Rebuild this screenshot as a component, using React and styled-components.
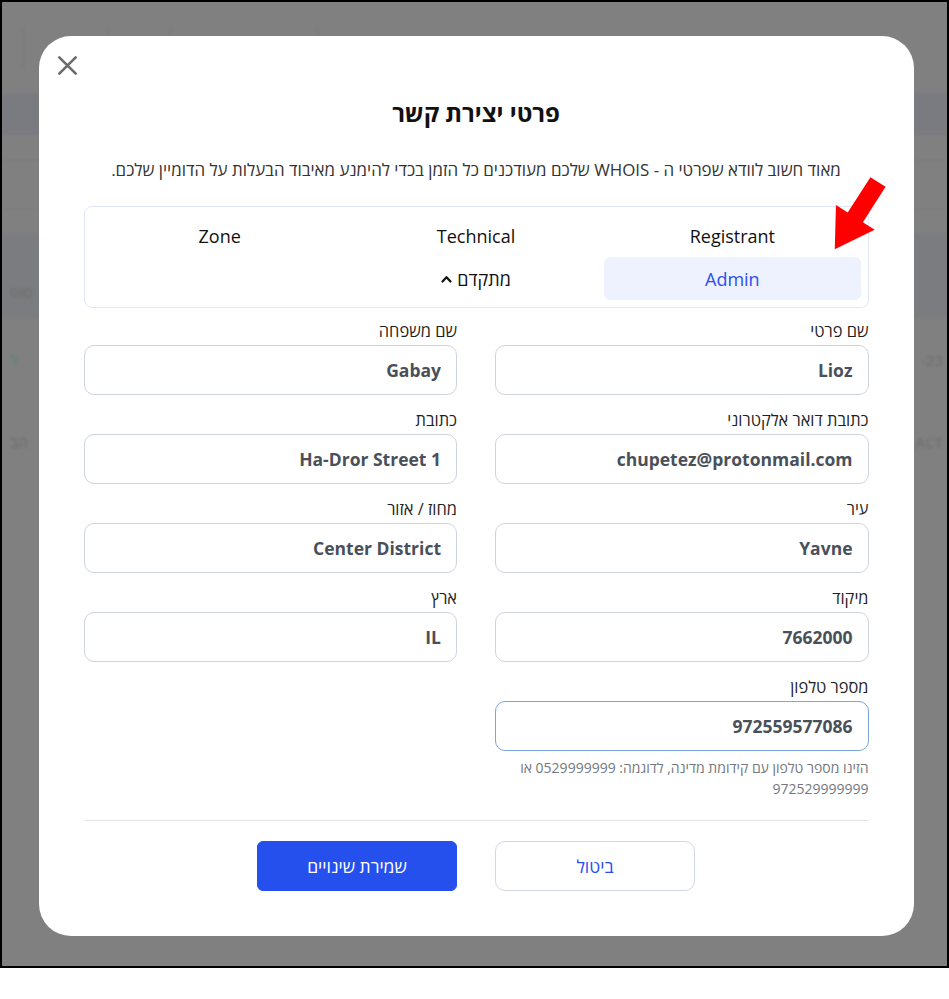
import React from 'react'
import styled, { createGlobalStyle } from 'styled-components'

const BLUE = '#2550ee'
const FONT = `"Open Sans", "Noto Sans", "DejaVu Sans", sans-serif`

const GlobalStyle = createGlobalStyle`
  html, body {
    margin: 0;
    padding: 0;
    background: #fff;
  }
  body {
    font-family: ${FONT};
  }
  * {
    box-sizing: border-box;
  }
`

const Frame = styled.div`
  position: relative;
  width: 949px;
  height: 968px;
  border: 2px solid #000;
  background: #808080;
  overflow: hidden;
`

/* dimmed page behind the dialog */
const BgPage = styled.div`
  filter: blur(1.4px);
  color: #707070;
  font-size: 15px;
  font-weight: 600;
`
const BgHeader = styled.div`
  height: 91px;
  display: flex;
  align-items: center;
  padding-left: 21px;
`
const BgCell = styled.div`
  width: ${(p) => p.$w}px;
  height: 42px;
  border-left: 1px solid #787878;
`
const BgRow = styled.div`
  height: ${(p) => p.$h}px;
  background: ${(p) => p.$bg || 'transparent'};
  border-bottom: ${(p) => (p.$line ? '1px solid #7a7a7a' : 'none')};
  display: flex;
  align-items: center;
  justify-content: space-between;
  padding: ${(p) => (p.$pt ? `${p.$pt}px` : '0')} 4px 0 8px;
`
const BgText = styled.span`
  color: ${(p) => p.$color || '#707070'};
`

const Overlay = styled.div`
  position: absolute;
  inset: 0;
  display: flex;
  align-items: flex-start;
  justify-content: center;
  padding: 34px 0 0 3px;
`

const Modal = styled.div`
  position: relative;
  width: 875px;
  background: #fff;
  border-radius: 32px;
  padding: 62px 45px 45px;
  direction: rtl;
`
const CloseButton = styled.button`
  position: absolute;
  top: 19px;
  left: 18px;
  width: 21px;
  height: 21px;
  padding: 0;
  border: none;
  background: none;
  cursor: pointer;
  display: flex;
`
const Title = styled.h2`
  margin: 0;
  font-size: 24px;
  line-height: 30px;
  font-weight: 700;
  color: #111;
  text-align: center;
`
const Subtitle = styled.p`
  margin: 30px 0 0;
  font-size: 16.9px;
  line-height: 24px;
  color: #333;
  text-align: center;
`

const TabsBox = styled.div`
  margin-top: 24px;
  border: 1px solid #e1e7f8;
  border-radius: 8px;
  padding: 7px;
  display: grid;
  grid-template-columns: repeat(3, 1fr);
  grid-auto-rows: 43px;
`
const Tab = styled.div`
  display: flex;
  align-items: center;
  justify-content: center;
  gap: 5px;
  border-radius: 6px;
  font-size: 18px;
  font-weight: 500;
  color: ${(p) => (p.$active ? '#2b4ff0' : '#111')};
  background: ${(p) => (p.$active ? '#eef2fe' : 'transparent')};
  cursor: pointer;
`

const FormGrid = styled.div`
  margin-top: 12px;
  display: grid;
  grid-template-columns: 1fr 1fr;
  column-gap: 38px;
  row-gap: 14px;
`
const Field = styled.div`
  display: flex;
  flex-direction: column;
`
const Label = styled.label`
  font-size: 16.4px;
  line-height: 22px;
  color: #1f1f1f;
  margin-bottom: 3px;
`
const Input = styled.input`
  height: 50px;
  width: 100%;
  border: 1px solid ${(p) => (p.$focused ? '#7ba6dc' : '#cfd4dc')};
  border-radius: 10px;
  padding: 0 15px;
  font-family: ${FONT};
  font-size: 17.5px;
  font-weight: 700;
  color: #4a5059;
  direction: rtl;
  text-align: right;
  outline: none;
  background: #fff;
`
const Hint = styled.div`
  margin-top: 6px;
  font-size: 14px;
  line-height: 21px;
  color: #74777c;
`

const Divider = styled.hr`
  margin: 21px 0 0;
  border: none;
  border-top: 1px solid #e4e6ea;
`
const Actions = styled.div`
  margin-top: 20px;
  display: flex;
  justify-content: center;
  gap: 38px;
`
const Button = styled.button`
  width: 200px;
  height: 50px;
  font-family: ${FONT};
  font-size: 17.5px;
  font-weight: 500;
  cursor: pointer;
  border-radius: ${(p) => (p.$primary ? '6px' : '10px')};
  border: 1px solid ${(p) => (p.$primary ? BLUE : '#d3d6e6')};
  background: ${(p) => (p.$primary ? BLUE : '#fff')};
  color: ${(p) => (p.$primary ? '#fff' : '#2a4ff0')};
`

const Pointer = styled.svg`
  position: absolute;
  left: 781px;
  top: 136px;
  width: 70px;
  height: 85px;
  pointer-events: none;
`

const CloseIcon = () => (
  <svg width="21" height="21" viewBox="0 0 21 21">
    <path d="M2.3 2.3 L18.7 18.7 M18.7 2.3 L2.3 18.7" stroke="#6b6b6b" strokeWidth="2.6" strokeLinecap="round" />
  </svg>
)

const Chevron = () => (
  <svg width="11" height="8" viewBox="0 0 11 8">
    <path d="M1.5 6.5 L5.5 2.2 L9.5 6.5" fill="none" stroke="#111" strokeWidth="2.2" strokeLinecap="round" strokeLinejoin="round" />
  </svg>
)

const fields = [
  { label: 'שם פרטי', value: 'Lioz' },
  { label: 'שם משפחה', value: 'Gabay' },
  { label: 'כתובת דואר אלקטרוני', value: 'chupetez@protonmail.com' },
  { label: 'כתובת', value: 'Ha-Dror Street 1' },
  { label: 'עיר', value: 'Yavne' },
  { label: 'מחוז / אזור', value: 'Center District' },
  { label: 'מיקוד', value: '7662000' },
  { label: 'ארץ', value: 'IL' },
]

export default function App() {
  return (
    <>
      <GlobalStyle />
      <Frame>
        <BgPage>
          <BgHeader>
            <BgCell $w={84} />
            <BgCell $w={63} />
            <BgCell $w={147} />
            <BgCell $w={1} />
          </BgHeader>
          <BgRow $h={42} $bg="#7a7b80" />
          <BgRow $h={26} $line />
          <BgRow $h={49} $line />
          <BgRow $h={23} />
          <BgRow $h={85} $bg="#7b7c80" $line $pt={34}>
            <BgText>סוט</BgText>
            <BgText />
          </BgRow>
          <BgRow $h={84}>
            <BgText $color="#5a867a">ל</BgText>
            <BgText>-23</BgText>
          </BgRow>
          <BgRow $h={80}>
            <BgText>הב</BgText>
            <BgText>ACT</BgText>
          </BgRow>
        </BgPage>

        <Overlay>
          <Modal>
            <CloseButton aria-label="close">
              <CloseIcon />
            </CloseButton>
            <Title>פרטי יצירת קשר</Title>
            <Subtitle>
              מאוד חשוב לוודא שפרטי ה - WHOIS שלכם מעודכנים כל הזמן בכדי להימנע מאיבוד הבעלות על הדומיין שלכם.
            </Subtitle>

            <TabsBox>
              <Tab>Registrant</Tab>
              <Tab>Technical</Tab>
              <Tab>Zone</Tab>
              <Tab $active>Admin</Tab>
              <Tab>
                מתקדם
                <Chevron />
              </Tab>
            </TabsBox>

            <FormGrid>
              {fields.map((f) => (
                <Field key={f.label}>
                  <Label>{f.label}</Label>
                  <Input defaultValue={f.value} readOnly />
                </Field>
              ))}
              <Field>
                <Label>מספר טלפון</Label>
                <Input defaultValue="972559577086" readOnly $focused />
                <Hint>הזינו מספר טלפון עם קידומת מדינה, לדוגמה: 0529999999 או 972529999999</Hint>
              </Field>
            </FormGrid>

            <Divider />
            <Actions>
              <Button>ביטול</Button>
              <Button $primary>שמירת שינויים</Button>
            </Actions>

            <Pointer viewBox="820 172 70 85">
              <polygon
                points="0,-9 42,-9 42,-23 80,0 42,23 42,9 0,9"
                fill="#ff0000"
                transform="translate(878 182) rotate(122.7)"
              />
            </Pointer>
          </Modal>
        </Overlay>
      </Frame>
    </>
  )
}
